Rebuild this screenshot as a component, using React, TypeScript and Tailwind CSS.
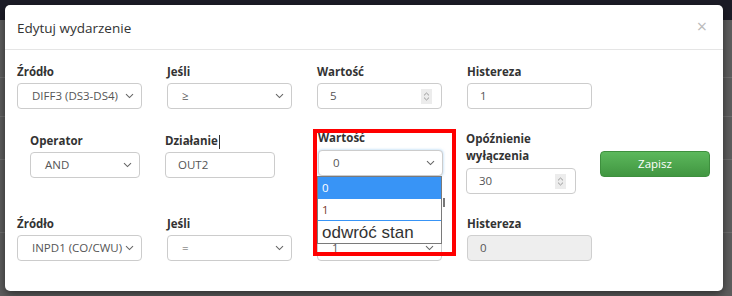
import React from "react";

const Chevron = () => (
    <svg width="9" height="6" viewBox="0 0 9 6" className="shrink-0">
        <path d="M1 1.2 L4.5 4.6 L8 1.2" fill="none" stroke="#666" strokeWidth="1.1" />
    </svg>
);

const Spinner = () => (
    <div className="w-[11px] h-[15px] bg-[#ececec] flex flex-col items-center justify-center gap-[1px]">
        <svg width="7" height="4" viewBox="0 0 7 4"><path d="M1 3.4 L3.5 1 L6 3.4" fill="none" stroke="#999" strokeWidth="1" /></svg>
        <svg width="7" height="4" viewBox="0 0 7 4"><path d="M1 0.6 L3.5 3 L6 0.6" fill="none" stroke="#999" strokeWidth="1" /></svg>
    </div>
);

interface FieldProps {
    value: string;
    width?: string;
    kind?: "select" | "number" | "text";
    disabled?: boolean;
    focused?: boolean;
}

const Field: React.FC<FieldProps> = ({ value, width = "w-[125px]", kind = "text", disabled, focused }) => (
    <div
        className={`${width} h-[26px] rounded-[4px] border flex items-center justify-between text-[11.5px] text-[#555] ${
            kind === "select" ? "pl-[14px] pr-[7px]" : "pl-[12px] pr-[9px]"
        } ${disabled ? "bg-[#eeeeee] border-[#cfcfcf]" : "bg-white border-[#cccccc]"} ${
            focused ? "border-[#66afe9] shadow-[0_0_3px_rgba(102,175,233,0.6)]" : ""
        }`}
    >
        <span className="leading-none whitespace-nowrap">{value}</span>
        {kind === "select" && <Chevron />}
        {kind === "number" && <Spinner />}
    </div>
);

const Label: React.FC<{ children: React.ReactNode; className?: string }> = ({ children, className = "" }) => (
    <p className={`text-[11.5px] font-bold text-[#333] leading-[17px] whitespace-nowrap ${className}`}>{children}</p>
);

export default function App() {
    return (
        <div className="relative w-[732px] h-[296px] overflow-hidden bg-[#5d5d5d]" style={{ fontFamily: '"Open Sans", "Noto Sans", sans-serif' }}>
            <div className="h-[20px] bg-[#1c1c27]" />
            <div className="h-[1px] bg-[#6e6e6e] mt-[57px]" />
            <div className="h-[1px] bg-[#6e6e6e] mt-[38px]" />
            <div className="h-[1px] bg-[#6e6e6e] mt-[42px]" />
            <div className="h-[1px] bg-[#6e6e6e] mt-[72px]" />

            <div className="absolute left-[5px] top-[5px] w-[718px] h-[286px] bg-white rounded-[5px] shadow-[0_3px_9px_rgba(0,0,0,0.5)]">
                <div className="h-[45px] border-b border-[#e5e5e5] pl-[12px] pr-[16px] flex items-center justify-between">
                    <h4 className="text-[13.5px] text-[#333] mt-[2px]">Edytuj wydarzenie</h4>
                    <span className="text-[18px] text-[#bbb] leading-none -mt-[3px]">×</span>
                </div>

                <div className="pl-[12px] pt-[13px]">
                    <div className="flex gap-[25px]">
                        <div>
                            <Label className="mb-[3px]">Źródło</Label>
                            <Field value="DIFF3 (DS3-DS4)" kind="select" />
                        </div>
                        <div>
                            <Label className="mb-[3px]">Jeśli</Label>
                            <Field value="≥" kind="select" />
                        </div>
                        <div>
                            <Label className="mb-[3px]">Wartość</Label>
                            <Field value="5" kind="number" />
                        </div>
                        <div>
                            <Label className="mb-[3px]">Histereza</Label>
                            <Field value="1" />
                        </div>
                    </div>

                    <div className="flex items-start mt-[21px]">
                        <div className="ml-[13px] mt-[2px]">
                            <Label className="mb-[3px]">Operator</Label>
                            <Field value="AND" kind="select" width="w-[110px]" />
                        </div>
                        <div className="ml-[25px] mt-[2px]">
                            <Label className="mb-[3px]">
                                Działanie<span className="inline-block w-[1px] h-[14px] bg-[#333] align-middle ml-[1px]" />
                            </Label>
                            <Field value="OUT2" width="w-[110px]" />
                        </div>
                        <div className="ml-[43px] mt-[-1px]">
                            <Label className="mb-[4px] leading-[16px]">Wartość</Label>
                            <Field value="0" kind="select" focused />
                        </div>
                        <div className="ml-[23px]">
                            <Label className="mb-[4px] leading-[16px]">
                                Opóźnienie
                                <br />
                                wyłączenia
                            </Label>
                            <Field value="30" kind="number" width="w-[110px]" />
                        </div>
                        <button
                            type="button"
                            className="ml-[24px] mt-[21px] w-[110px] h-[26px] rounded-[4px] border border-[#3e8f3e] bg-gradient-to-b from-[#5cb85c] to-[#419641] text-white text-[11.5px]"
                        >
                            Zapisz
                        </button>
                    </div>

                    <div className="flex gap-[25px] mt-[21px]">
                        <div>
                            <Label className="mb-[3px]">Źródło</Label>
                            <Field value="INPD1 (CO/CWU)" kind="select" />
                        </div>
                        <div>
                            <Label className="mb-[3px]">Jeśli</Label>
                            <Field value="=" kind="select" />
                        </div>
                        <div>
                            <Label className="mb-[3px]">Wartość</Label>
                            <Field value="1" kind="select" />
                        </div>
                        <div>
                            <Label className="mb-[3px]">Histereza</Label>
                            <Field value="0" disabled />
                        </div>
                    </div>
                </div>

                {/* open native select list */}
                <div className="absolute left-[312px] top-[171px] w-[125px] border border-[#7a7a7a] bg-white">
                    <div className="h-[22px] bg-[#3894f6] text-white text-[11.5px] pl-[4px] flex items-center">0</div>
                    <div className="h-[22px] text-[#7b3b2c] text-[11.5px] pl-[4px] flex items-center border-b border-[#3894f6]">1</div>
                    <div className="h-[22px] text-[#333] text-[17px] pl-[4px] flex items-center leading-none" style={{ fontFamily: '"Liberation Sans", Arial, sans-serif' }}>
                        odwróć stan
                    </div>
                </div>
                <div className="absolute left-[438px] top-[193px] w-[2px] h-[9px] bg-[#777]" />

                {/* red highlight frame */}
                <div className="absolute left-[308px] top-[124px] w-[143px] h-[127px] border-4 border-[#ff0000]" />
            </div>
        </div>
    );
}
